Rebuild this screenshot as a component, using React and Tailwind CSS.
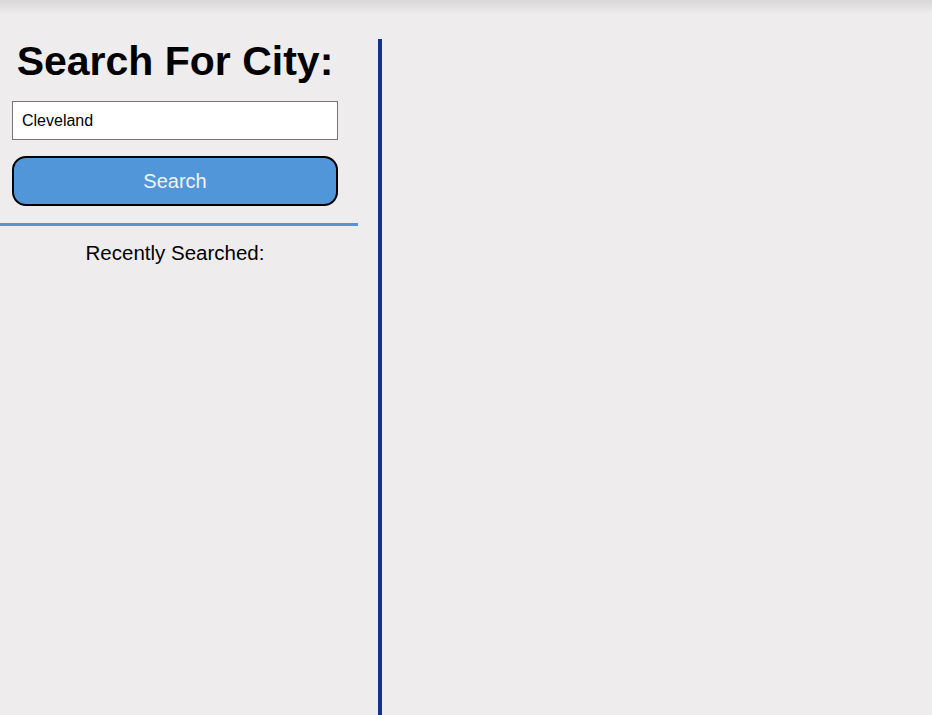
export default function App() {
  return (
    <div className="min-h-[715px] bg-[#eeeced] font-['Liberation_Sans',Arial,sans-serif] text-black">
      <div className="h-[14px] bg-gradient-to-b from-[#d9d7d8] to-[#eeeced]" />
      <div className="flex pt-[25px] min-h-[701px]">
        <div className="w-[358px] shrink-0 flex flex-col">
          <div className="pl-[12px] pr-[20px]">
            <h1 className="-mt-[1px] text-[41px] leading-[46px] font-bold text-center whitespace-nowrap">Search For City:</h1>
            <input
              defaultValue="Cleveland"
              className="mt-[17px] block w-full h-[39px] bg-white border border-[#767676] px-[9px] text-[16px] text-black outline-none"
            />
            <button className="mt-[16px] block w-full h-[50px] rounded-[14px] border-2 border-black bg-[#5096d8] text-[20px] text-[#f3f3f3]">
              Search
            </button>
          </div>
          <div className="mt-[17px] h-[3px] bg-[#5096d8]" />
          <div className="pl-[12px] pr-[20px]">
            <p className="mt-[15px] text-[20.5px] leading-[23px] text-center">Recently Searched:</p>
          </div>
        </div>
        <div className="ml-[20px] flex-1 border-l-4 border-[#13318f]" />
      </div>
    </div>
  );
}
